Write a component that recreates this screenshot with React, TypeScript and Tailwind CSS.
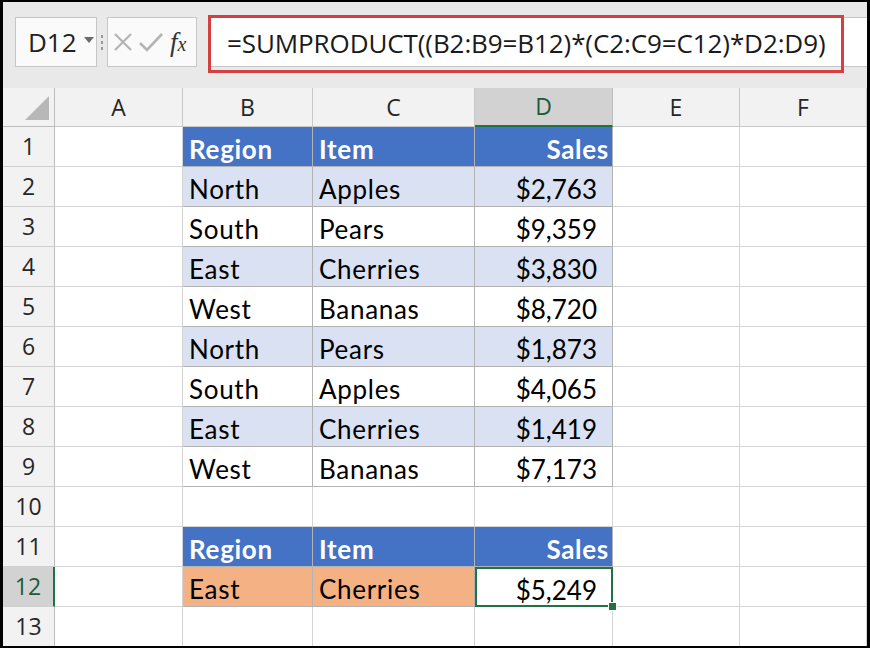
import React from "react";

const cols = ["A", "B", "C", "D", "E", "F"];

type Row = { region: string; item: string; sales: string };

const rows: Row[] = [
  { region: "North", item: "Apples", sales: "$2,763" },
  { region: "South", item: "Pears", sales: "$9,359" },
  { region: "East", item: "Cherries", sales: "$3,830" },
  { region: "West", item: "Bananas", sales: "$8,720" },
  { region: "North", item: "Pears", sales: "$1,873" },
  { region: "South", item: "Apples", sales: "$4,065" },
  { region: "East", item: "Cherries", sales: "$1,419" },
  { region: "West", item: "Bananas", sales: "$7,173" },
];

const grid = "border-r border-b border-[#d4d4d4]";
const tbl = "border-r border-b border-[#b3b3b3]";
const cellText = "flex items-center pt-[6px] font-[Lato,sans-serif] text-[26px] tracking-[0.7px] text-black";
const numText = "flex items-center justify-end pt-[6px] font-[Lato,sans-serif] text-[26px] text-black";

function RowHead({ n, active }: { n: number; active?: boolean }) {
  return (
    <div
      className={`flex items-center justify-center border-b border-[#cfcfcf] text-[23px] ${
        active
          ? "bg-[#d2d2d2] border-r-2 border-r-[#217346] text-[#1d5c37]"
          : "bg-[#f2f2f2] border-r border-r-[#bdbdbd] text-[#262626]"
      }`}
    >
      {n}
    </div>
  );
}

function HeaderRow() {
  return (
    <>
      <div className={`${cellText} ${tbl} bg-[#4472c4] pl-[6px] font-bold text-white`}>Region</div>
      <div className={`${cellText} ${tbl} bg-[#4472c4] pl-[6px] font-bold text-white`}>Item</div>
      <div className={`${cellText} ${tbl} bg-[#4472c4] justify-end pr-[3px] font-bold text-white`}>Sales</div>
    </>
  );
}

export default function App() {
  return (
    <div
      className="h-[648px] w-[870px] overflow-hidden border-x-[3px] border-y-2 border-black bg-[#e9e9e9]"
      style={{ fontFamily: "'Open Sans', 'Noto Sans', sans-serif" }}
    >
      {/* formula bar */}
      <div className="flex h-[86px] items-start pl-[12px] pt-[15px]">
        <div className="flex h-[50px] w-[82px] items-center border border-[#c6c6c6] bg-[#fafafa] pl-[12px]">
          <span className="text-[26px] leading-none text-[#222]">D12</span>
          <svg width="10" height="7" viewBox="0 0 10 7" className="ml-[7px] mt-[-4px]">
            <polygon points="0,0 10,0 5,6" fill="#6b6b6b" />
          </svg>
        </div>
        <div className="flex h-[50px] w-[10px] flex-col items-center justify-center gap-[3px]">
          <span className="h-[3px] w-[2px] bg-[#9a9a9a]" />
          <span className="h-[3px] w-[2px] bg-[#9a9a9a]" />
          <span className="h-[3px] w-[2px] bg-[#9a9a9a]" />
        </div>
        <div className="flex h-[50px] w-[90px] items-center border border-[#c6c6c6] bg-[#fafafa] pl-[5px]">
          <svg width="20" height="20" viewBox="0 0 20 20">
            <path d="M2 2 L18 18 M18 2 L2 18" stroke="#b4b4b4" strokeWidth="2.2" fill="none" />
          </svg>
          <svg width="26" height="20" viewBox="0 0 26 20" className="ml-[5px]">
            <path d="M2 11 L9 18 L24 2" stroke="#b4b4b4" strokeWidth="2.6" fill="none" />
          </svg>
          <span
            className="ml-[6px] text-[27px] italic leading-none text-[#333]"
            style={{ fontFamily: "'Liberation Serif', serif" }}
          >
            f<span className="text-[20px]">x</span>
          </span>
        </div>
        <div className="relative ml-[11px] flex h-[50px] flex-1 items-center border-y border-l border-[#c6c6c6] bg-white">
          <div className="absolute left-[-1px] top-[-3px] h-[58px] w-[636px] border-[3px] border-[#d43f3f]" />
          <span className="pl-[18px] pt-[2px] text-[26px] tracking-[-0.1px] text-[#1a1a1a]">
            =SUMPRODUCT((B2:B9=B12)*(C2:C9=C12)*D2:D9)
          </span>
        </div>
      </div>

      {/* sheet */}
      <div className="relative grid grid-cols-[52px_128px_130px_162px_138px_127px_127px] grid-rows-[39px_repeat(13,40px)] bg-white">
        <div className="flex items-end justify-end border-r border-b border-[#bdbdbd] bg-[#f2f2f2] pb-[6px] pr-[5px]">
          <svg width="24" height="24" viewBox="0 0 24 24">
            <polygon points="24,0 24,24 0,24" fill="#b8b8b8" />
          </svg>
        </div>
        {cols.map((c) => (
          <div
            key={c}
            className={`flex items-center justify-center text-[23px] ${
              c === "D"
                ? "border-r border-r-[#bdbdbd] border-b-2 border-b-[#217346] bg-[#d2d2d2] text-[#1d5c37]"
                : "border-r border-b border-[#c8c8c8] bg-[#f2f2f2] text-[#262626]"
            }`}
          >
            {c}
          </div>
        ))}

        {/* row 1 */}
        <RowHead n={1} />
        <div className={grid} />
        <HeaderRow />
        <div className={grid} />
        <div className={grid} />

        {rows.map((r, i) => {
          const band = i % 2 === 0 ? "bg-[#d9e1f2]" : "bg-white";
          return (
            <React.Fragment key={i}>
              <RowHead n={i + 2} />
              <div className={grid} />
              <div className={`${cellText} ${tbl} ${band} pl-[6px]`}>{r.region}</div>
              <div className={`${cellText} ${tbl} ${band} pl-[6px]`}>{r.item}</div>
              <div className={`${numText} ${tbl} ${band} pr-[15px]`}>{r.sales}</div>
              <div className={grid} />
              <div className={grid} />
            </React.Fragment>
          );
        })}

        {/* row 10 */}
        <RowHead n={10} />
        <div className={grid} />
        <div className={grid} />
        <div className={grid} />
        <div className={grid} />
        <div className={grid} />
        <div className={grid} />

        {/* row 11 */}
        <RowHead n={11} />
        <div className={grid} />
        <HeaderRow />
        <div className={grid} />
        <div className={grid} />

        {/* row 12 */}
        <RowHead n={12} active />
        <div className={grid} />
        <div className={`${cellText} ${tbl} bg-[#f4b183] pl-[6px] text-[#3a2a1a]`}>East</div>
        <div className={`${cellText} ${tbl} bg-[#f4b183] pl-[6px] text-[#3a2a1a]`}>Cherries</div>
        <div className={`${numText} relative border-2 border-[#217346] bg-white pr-[14px]`}>
          $5,249
          <span className="absolute bottom-[-6px] right-[-6px] h-[9px] w-[9px] border border-white bg-[#217346]" />
        </div>
        <div className={grid} />
        <div className={grid} />

        {/* row 13 */}
        <RowHead n={13} />
        <div className={grid} />
        <div className={grid} />
        <div className={grid} />
        <div className={grid} />
        <div className={grid} />
        <div className={grid} />
      </div>
    </div>
  );
}
